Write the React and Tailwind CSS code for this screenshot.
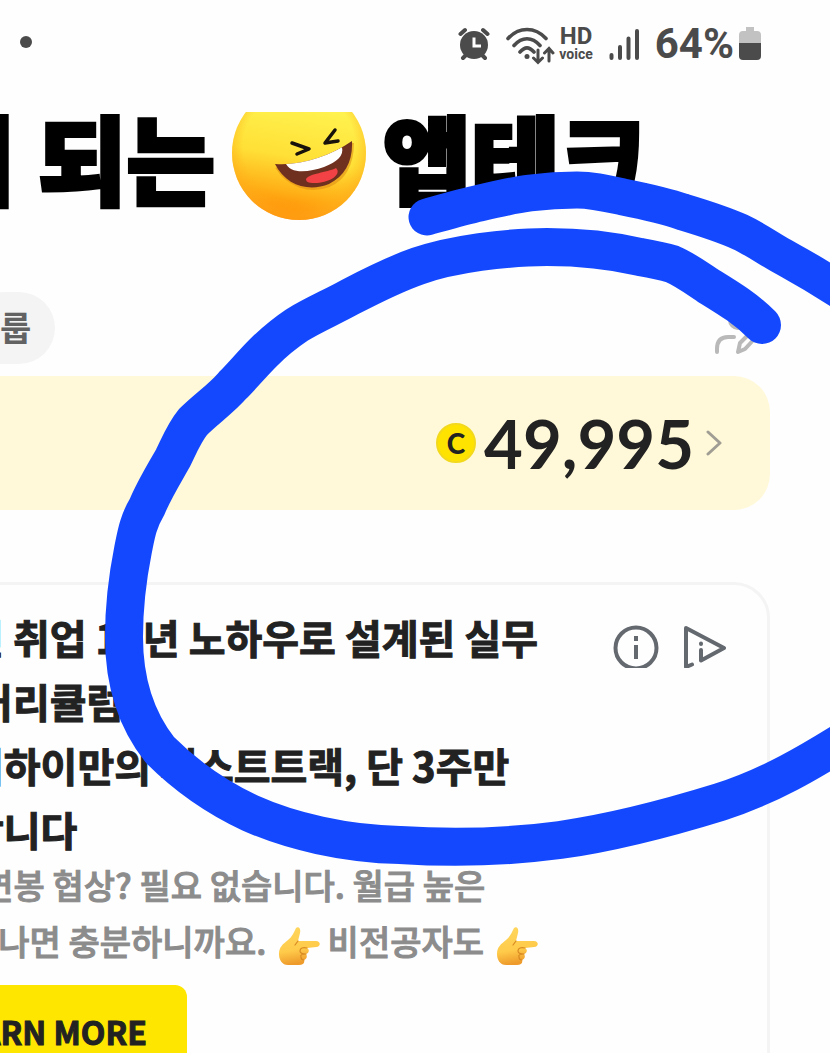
const headlineLines = [
  "민 취업 10년 노하우로 설계된 실무",
  "\u00a0커리큘럼",
  "더하이만의 패스트트랙, 단 3주만",
  "합니다",
];

const AlarmIcon = () => (
  <svg width="32" height="34" viewBox="0 0 32 34" fill="none" aria-hidden="true">
    <g stroke="#4b4b4b" strokeWidth="4" strokeLinecap="round">
      <path d="M2.500 7 7 3M29.500 7 25 3M5 31l4-4M27 31l-4-4" />
    </g>
    <circle cx="16" cy="18" r="14" fill="#4b4b4b" />
    <path d="M16 10.500V19h7" stroke="#fff" strokeWidth="3" />
  </svg>
);

const WifiIcon = () => (
  <svg width="49" height="38" viewBox="0 0 49 38" fill="none" stroke="#4b4b4b" aria-hidden="true">
    <g strokeWidth="3.600" strokeLinecap="round">
      <path d="M2 11.500C13-.5 29-.5 40 11.500M8 18.500c8-9 18-9 26 0M14 25c5-5.500 9-5.500 14 0" />
      <path d="M32 23v12M27.500 31l4.500 4.500 4.500-4.500M43 34V22M38.500 26l4.500-4.500L47 26" strokeWidth="3" />
    </g>
    <circle cx="21" cy="29.500" r="2.500" fill="#4b4b4b" stroke="none" />
  </svg>
);

const SignalIcon = () => (
  <svg width="30" height="33" viewBox="0 0 30 33" stroke="#4b4b4b" strokeWidth="4" strokeLinecap="round" aria-hidden="true">
    <path d="M2.500 27v3M11 19v11M19.500 10.500V30M28 3v27" />
  </svg>
);

const BatteryIcon = () => (
  <svg width="24" height="34" viewBox="0 0 24 34" aria-hidden="true">
    <path d="M8 0h8v4h3a4 4 0 0 1 4 4v9H1V8a4 4 0 0 1 4-4h3z" fill="#c2c2c2" />
    <path d="M1 16h22v13a4 4 0 0 1-4 4H5a4 4 0 0 1-4-4z" fill="#4b4b4b" />
  </svg>
);

const LaughingFace = () => (
  <svg width="136" height="108" viewBox="0 0 136 108" className="shrink-0" role="img" aria-label="😆">
    <defs>
      <linearGradient id="face" x1="0.55" y1="0.15" x2="0.4" y2="1">
        <stop offset="0" stopColor="#fff24f" />
        <stop offset="0.45" stopColor="#ffe036" />
        <stop offset="0.75" stopColor="#ffb117" />
        <stop offset="1" stopColor="#ff8000" />
      </linearGradient>
      <radialGradient id="shine" cx="0.5" cy="0.45" r="0.52">
        <stop offset="0.8" stopColor="#ffb31a" stopOpacity="0" />
        <stop offset="1" stopColor="#ffad1c" stopOpacity="0.55" />
      </radialGradient>
      <clipPath id="mouth">
        <path d="M44 52c26 2 55-8 77-23 1 20-7 35-23 43-20 8-43 2-54-20z" />
      </clipPath>
    </defs>
    <circle cx="68" cy="41" r="67" fill="url(#face)" />
    <circle cx="68" cy="41" r="67" fill="url(#shine)" />
    <path d="M46 55c12 19 33 25 52 18 14-6 23-20 23-42" fill="none" stroke="#dc8b15" strokeWidth="4" opacity="0.55" />
    <g clipPath="url(#mouth)">
      <rect x="40" y="25" width="86" height="55" fill="#70301f" />
      <path d="M54 50c22 0 40-6 57-15 2 9-5 15-18 20-15 5-34 8-39-5z" fill="#fff" />
      <path d="M75 67c4-6 20-6 30-11 6 6-5 14-19 15-7 0-11 0-11-4z" fill="#f24245" />
    </g>
    <g fill="none" stroke="#17120b" strokeWidth="3.500" strokeLinecap="round" strokeLinejoin="round">
      <path d="m61 31 17 6-12 5M104 18 94 31l13-2" />
    </g>
  </svg>
);

const PointingHand = () => (
  <svg width="42" height="40" viewBox="0 0 42 40" className="ml-1 inline-block align-middle" role="img" aria-label="👉">
    <defs>
      <linearGradient id="skin" x1="0" y1="0" x2="0.200" y2="1">
        <stop offset="0" stopColor="#ffd75e" />
        <stop offset="0.65" stopColor="#ffcb4b" />
        <stop offset="1" stopColor="#ee9b2b" />
      </linearGradient>
    </defs>
    <path
      d="M18 2c3-2 5 1 4 5l-2 8h18c5 0 5 6 0 6l-9 1c3 2 2 5-1 6 2 3 0 5-2 6 1 3-1 5-5 5H10C4 39 1 34 1 28c0-7 4-10 9-14 4-3 6-8 8-12z"
      fill="url(#skin)"
    />
    <path d="M29 22c-4-1-7 0-7 3 0 2 3 3 6 3M28 28c-4 0-6 1-5 3 0 2 1 3 3 3M20 15l-3 4" fill="none" stroke="#d88a22" strokeWidth="1.200" strokeLinecap="round" />
  </svg>
);

const EditProfileIcon = () => (
  <svg width="48" height="48" viewBox="0 0 48 48" fill="none" stroke="#b9b9b9" strokeWidth="4" strokeLinecap="round" strokeLinejoin="round" aria-hidden="true">
    <circle cx="24" cy="12" r="8" />
    <path d="M3 44v-3c0-8 4-12 11-12h6M24 44l2-9 13-13c4-3 8 1 5 5L31 41z" />
  </svg>
);

const InfoIcon = () => (
  <svg width="46" height="43" viewBox="0 0 46 43" fill="none" aria-hidden="true">
    <circle cx="23" cy="23" r="20.500" stroke="#646970" strokeWidth="4" />
    <path d="M23 11v5M23 20v14" stroke="#646970" strokeWidth="4" />
  </svg>
);

const AdChoicesIcon = () => (
  <svg width="44" height="43" viewBox="0 0 44 43" fill="none" stroke="#646970" strokeWidth="4" strokeLinecap="round" strokeLinejoin="round" aria-hidden="true">
    <path d="M9 39.500 3 42V3l38 20-23 12.500V25" />
    <path d="M18 18.500v.5" />
  </svg>
);

// freehand pen mark drawn over the screen
const PenMark = () => (
  <svg
    viewBox="0 0 830 1053"
    className="pointer-events-none absolute left-0 top-0 w-full"
    fill="none"
    stroke="#1448ff"
    strokeWidth="38"
    strokeLinecap="round"
    strokeLinejoin="round"
    aria-hidden="true"
  >
    <path
      d="M427 217C445 212 462 207 480 203C497 199 514 195 530 193C546 191 561 190 577 190C593 190 605 193 623 197C643 201 663 205 683 212C703 218 722 224 740 232C755 239 766 247 780 255C796 264 812 272 850 297"
      strokeWidth="37"
    />
    <path d="M762 325C745 308 728 298 707 285C695 277 684 269 672 264C662 261 651 259 640 257C610 250 580 247 547 247C525 247 503 249 480 252C459 255 438 259 418 266C395 274 373 285 350 297C332 307 313 315 297 325C285 333 274 342 263 353C252 364 243 375 233 385C221 399 206 409 193 422C184 433 179 446 173 458C164 474 154 490 147 507C138 522 136 535 133 550C127 580 124 610 124 637C124 675 133 716 160 750C187 777 216 797 250 813C290 831 345 844 400 845C460 849 515 846 560 840C610 833 665 819 720 802C770 786 810 762 850 737" />
  </svg>
);

const StatusBar = () => (
  <header className="flex h-28 items-start justify-between pl-5 pr-17 pt-5 text-[#4b4b4b]">
    <span className="mt-4 size-3 rounded-full bg-[#4b4b4b]" />
    <div className="flex h-12 items-center">
      <AlarmIcon />
      <span className="ml-4 mt-1"><WifiIcon /></span>
      <div className="ml-1 flex flex-col items-center font-['Roboto',sans-serif] font-bold">
        <span className="text-2xl leading-5">HD</span>
        <span className="text-sm leading-4">voice</span>
      </div>
      <span className="ml-4"><SignalIcon /></span>
      <span className="ml-4 font-['Roboto',sans-serif] text-[42px] font-bold leading-none">64%</span>
      <span className="ml-1"><BatteryIcon /></span>
    </div>
  </header>
);

export default function App() {
  return (
    <div className="relative h-screen overflow-hidden bg-[#fefefe] font-['Noto_Sans_CJK_KR',sans-serif] text-[#222222]">
      <StatusBar />

      <h1 className="-ml-18 flex h-27 items-start gap-4 whitespace-nowrap text-[96px] font-black leading-22 text-black [-webkit-text-stroke:4px]">
        <span>이 되는</span>
        <LaughingFace />
        <span>앱테크</span>
      </h1>

      <div className="mt-18 flex h-18 items-center justify-between pr-17">
        <button className="-ml-8 h-18 rounded-full bg-[#f4f4f4] pb-1 pl-8 pr-6 text-[34px] font-bold text-[#626262]">
          룹
        </button>
        <button aria-label="프로필 편집" className="mt-2">
          <EditProfileIcon />
        </button>
      </div>

      <a
        href="#coins"
        className="-ml-10 mr-15 mt-3 flex h-[134px] items-center justify-end rounded-[36px] bg-[#fff9d9] pr-12"
      >
        <span className="flex size-10 items-center justify-center rounded-full border-2 border-[#f3d91d] bg-[#ffe300] font-['Lato',sans-serif] text-[28px] font-black leading-none">
          C
        </span>
        <span className="ml-2 font-['Lato',sans-serif] text-[67px] font-bold leading-none">49,995</span>
        <svg width="16" height="26" viewBox="0 0 16 26" fill="none" stroke="#a09e94" strokeWidth="3" strokeLinecap="round" strokeLinejoin="round" className="ml-3" aria-hidden="true">
          <path d="m2 2 12 11L2 24" />
        </svg>
      </a>

      <section className="-ml-10 mr-15 mt-18 flex h-screen items-start justify-between rounded-[36px] border-3 border-[#f4f4f4] pl-1 pr-10 pt-5">
        <div className="whitespace-nowrap">
          <h2 className="text-[40px] font-bold leading-16 [-webkit-text-stroke:1px]">
            {headlineLines.map((line) => (
              <span key={line} className="block">{line}</span>
            ))}
          </h2>
          <p className="-mt-1 text-[34px] font-medium leading-14 text-[#8c8c8c] [-webkit-text-stroke:1px]">
            &nbsp;&nbsp;연봉 협상? 필요 없습니다. 월급 높은
            <br />
            하나면 충분하니까요. <PointingHand /> 비전공자도 <PointingHand />
          </p>
          <button className="-ml-7 mt-4 h-23 w-62 rounded-xl bg-[#ffe600] pr-10 text-right text-[32px] font-bold [-webkit-text-stroke:1px]">
            LEARN MORE
          </button>
        </div>
        <div className="mt-5 flex gap-6">
          <button aria-label="광고 정보"><InfoIcon /></button>
          <button aria-label="광고 선택"><AdChoicesIcon /></button>
        </div>
      </section>

      <PenMark />
    </div>
  );
}
